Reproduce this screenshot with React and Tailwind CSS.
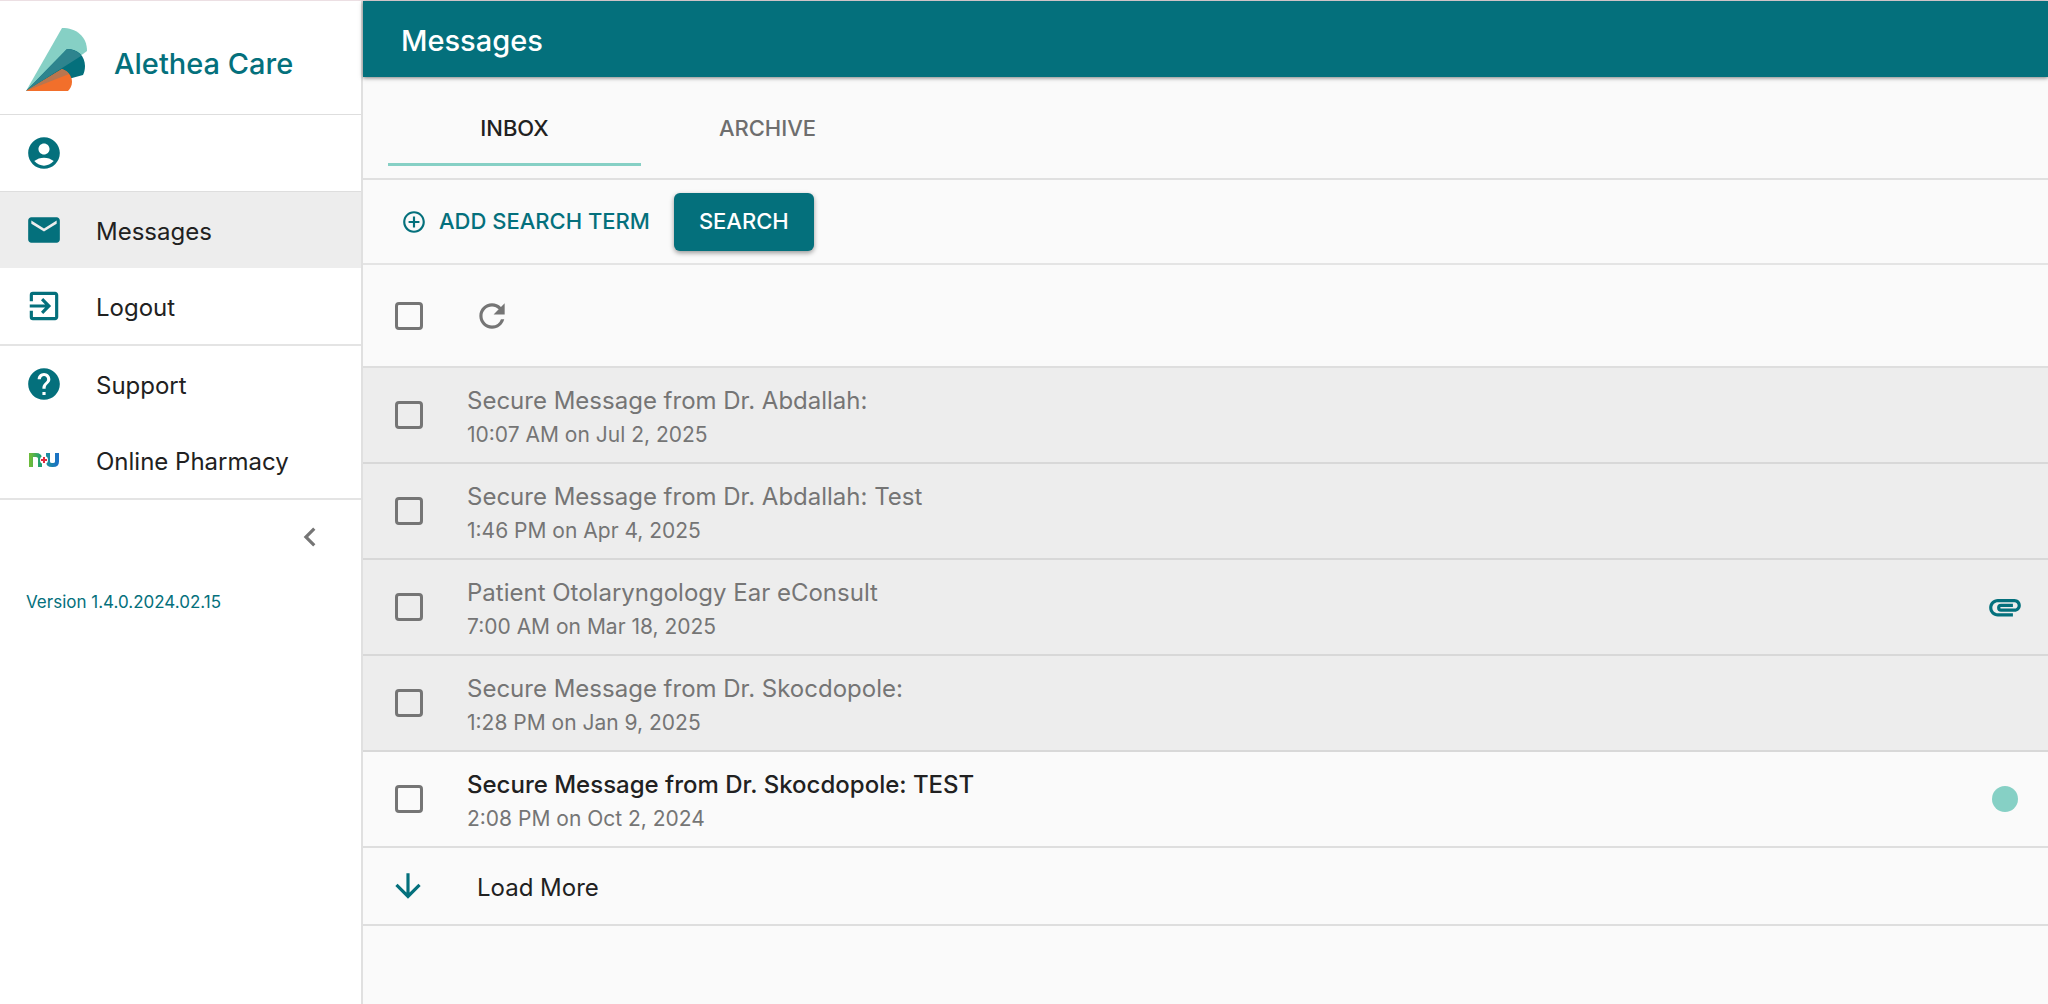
import { useState } from "react";
import {
    MdAccountCircle,
    MdAddCircleOutline,
    MdArrowDownward,
    MdAttachment,
    MdChevronLeft,
    MdEmail,
    MdExitToApp,
    MdHelp,
    MdRefresh,
} from "react-icons/md";

const messages = [
    { id: 1, subject: "Secure Message from Dr. Abdallah:", date: "10:07 AM on Jul 2, 2025", read: true },
    { id: 2, subject: "Secure Message from Dr. Abdallah: Test", date: "1:46 PM on Apr 4, 2025", read: true },
    { id: 3, subject: "Patient Otolaryngology Ear eConsult", date: "7:00 AM on Mar 18, 2025", read: true, attachment: true },
    { id: 4, subject: "Secure Message from Dr. Skocdopole:", date: "1:28 PM on Jan 9, 2025", read: true },
    { id: 5, subject: "Secure Message from Dr. Skocdopole: TEST", date: "2:08 PM on Oct 2, 2024", read: false },
];

function Logo() {
    return (
        <svg viewBox="0 0 62 64" className="h-16 w-[62px] shrink-0" aria-hidden="true">
            <path d="M0 63 36 0C50 0 61 8 61 23L57 26Z" fill="#86d0c5" />
            <path d="M0 63 41 21C52 21 59 28 59 38C59 42 58 45 57 47L46 50Z" fill="#04707c" />
            <path d="M0 63 41 21C47 21 53 24 55 28Z" fill="#2e848e" />
            <path d="M0 63 36 41C42 43 46 48 46 54C46 58 44 61 42 63Z" fill="#f26f2b" />
            <path d="M0 63 36 41C39 42 42 44 43 46Z" fill="#b8764f" />
        </svg>
    );
}

function PharmacyIcon() {
    return (
        <svg viewBox="0 0 30 16" className="h-4 w-[30px]" fill="none" aria-hidden="true">
            <defs>
                <linearGradient id="nGreen" x1="0" x2="1">
                    <stop offset="0" stopColor="#6cbb3c" />
                    <stop offset="1" stopColor="#1f9e74" />
                </linearGradient>
                <linearGradient id="uBlue" x1="0" x2="1">
                    <stop offset="0" stopColor="#1c8fa0" />
                    <stop offset="1" stopColor="#1b72c4" />
                </linearGradient>
            </defs>
            <path d="M2 15V3H7Q11 3 11 6.500V15" stroke="url(#nGreen)" strokeWidth="4" />
            <path d="M19 1V9.500Q19 13 23 13H24Q28 13 28 9.500V1" stroke="url(#uBlue)" strokeWidth="4" />
            <circle cx="15" cy="8" r="4" fill="#fff" />
            <path d="M15 5V11M12 8H18" stroke="#e0283c" strokeWidth="2" />
        </svg>
    );
}

function NavItem({ icon, label, active }) {
    return (
        <a
            href="#"
            aria-label={label || "Account"}
            aria-current={active ? "page" : undefined}
            className={`flex h-[76px] items-center px-[25px] text-2xl text-[#212121] ${active ? "bg-[#ededed]" : ""}`}
        >
            <span className="flex w-[71px] shrink-0 items-center text-[38px] text-[#04707c]">{icon}</span>
            <span className="pt-1">{label}</span>
        </a>
    );
}

function Checkbox({ label, checked, onChange }) {
    return (
        <input
            type="checkbox"
            aria-label={label}
            checked={checked}
            onChange={onChange}
            className="size-7 shrink-0 appearance-none rounded-sm border-3 border-[#757575] checked:bg-[#04707c]"
        />
    );
}

export default function App() {
    const [tab, setTab] = useState("INBOX");
    const [selected, setSelected] = useState([]);

    const toggle = (id) => {
        setSelected(prev => prev.includes(id) ? prev.filter(i => i !== id) : [...prev, id]);
    };

    const allSelected = selected.length === messages.length;

    return (
        <div className="flex min-h-screen border-t border-[#ecdfe3] bg-[#fafafa] font-[Inter,sans-serif] text-[#212121]">
            {/* Sidebar */}
            <aside className="w-[363px] shrink-0 border-r-2 border-[#e0e0e0] bg-white">
                <div className="flex h-[114px] items-center gap-[26px] border-b border-[#dedede] px-[26px] pt-1">
                    <Logo />
                    <span className="pt-2 text-[29px] font-medium text-[#04707c]">Alethea Care</span>
                </div>
                <nav>
                    <div className="border-b border-[#dedede]">
                        <NavItem icon={<MdAccountCircle />} />
                    </div>
                    <div className="border-b-2 border-[#e4e4e4]">
                        <NavItem icon={<MdEmail />} label="Messages" active />
                        <NavItem icon={<MdExitToApp />} label="Logout" />
                    </div>
                    <div className="border-b-2 border-[#e4e4e4]">
                        <NavItem icon={<MdHelp />} label="Support" />
                        <NavItem icon={<span className="pl-1"><PharmacyIcon /></span>} label="Online Pharmacy" />
                    </div>
                </nav>
                <div className="flex justify-end px-8 py-[18px]">
                    <button aria-label="Collapse menu" className="text-[38px] text-[#757575]">
                        <MdChevronLeft />
                    </button>
                </div>
                <p className="px-[26px] pt-4 text-[17px] text-[#04707c]">Version 1.4.0.2024.02.15</p>
            </aside>

            {/* Messages */}
            <main className="min-w-0 flex-1">
                <header className="relative flex h-[76px] items-center bg-[#04707c] px-[38px] pt-1 shadow-[0_1px_4px_rgba(0,0,0,0.5)]">
                    <h1 className="text-[29px] font-medium text-white">Messages</h1>
                </header>

                <div role="tablist" className="flex border-b-2 border-[#e0e0e0] px-[25px] pt-3 pb-3">
                    {["INBOX", "ARCHIVE"].map(name => (
                        <button
                            key={name}
                            role="tab"
                            aria-selected={tab === name}
                            onClick={() => setTab(name)}
                            className={`h-[77px] w-[253px] border-b-3 pt-1 text-[22px] font-medium ${tab === name
                                ? "border-[#86d0c5] text-[#212121]"
                                : "border-transparent text-[#6e6e6e]"
                                }`}
                        >
                            {name}
                        </button>
                    ))}
                </div>

                <div className="flex h-[85px] items-center gap-6 border-b-2 border-[#e4e4e4] px-[38px]">
                    <button className="flex items-center gap-3 text-[22px] font-medium text-[#04707c]">
                        <MdAddCircleOutline className="size-[26px]" />
                        ADD SEARCH TERM
                    </button>
                    <button className="h-[58px] rounded-md bg-[#04707c] px-[25px] text-[22px] font-medium text-white shadow-[0_2px_5px_rgba(0,0,0,0.4)]">
                        SEARCH
                    </button>
                </div>

                <div className="flex h-[103px] items-center gap-[50px] border-b-2 border-[#dedede] px-8">
                    <Checkbox
                        label="Select all"
                        checked={allSelected}
                        onChange={() => setSelected(allSelected ? [] : messages.map(m => m.id))}
                    />
                    <button aria-label="Refresh" className="text-[38px] text-[#757575]">
                        <MdRefresh />
                    </button>
                </div>

                <ul>
                    {messages.map(m => (
                        <li
                            key={m.id}
                            className={`flex h-24 items-center border-b-2 pr-6 pl-8 ${m.read ? "border-[#d8d8d8] bg-[#ededed]" : "border-[#dedede]"}`}
                        >
                            <Checkbox label={m.subject} checked={selected.includes(m.id)} onChange={() => toggle(m.id)} />
                            <div className="ml-11 flex-1 pt-1">
                                <p className={`text-2xl leading-9 ${m.read ? "text-[#757575]" : "font-medium text-[#212121]"}`}>
                                    {m.subject}
                                </p>
                                <p className="text-[21px] leading-8 text-[#757575]">{m.date}</p>
                            </div>
                            <div className="flex w-[38px] shrink-0 justify-center">
                                {m.attachment && <MdAttachment className="size-[38px] text-[#04707c]" />}
                                {!m.read && <span className="size-[26px] rounded-full bg-[#86d0c5]" />}
                            </div>
                        </li>
                    ))}
                </ul>

                <button className="flex h-[78px] w-full items-center gap-[50px] border-b-2 border-[#dedede] px-[26px] text-2xl">
                    <MdArrowDownward className="size-[38px] text-[#04707c]" />
                    <span className="pt-1">Load More</span>
                </button>
            </main>
        </div>
    );
}
